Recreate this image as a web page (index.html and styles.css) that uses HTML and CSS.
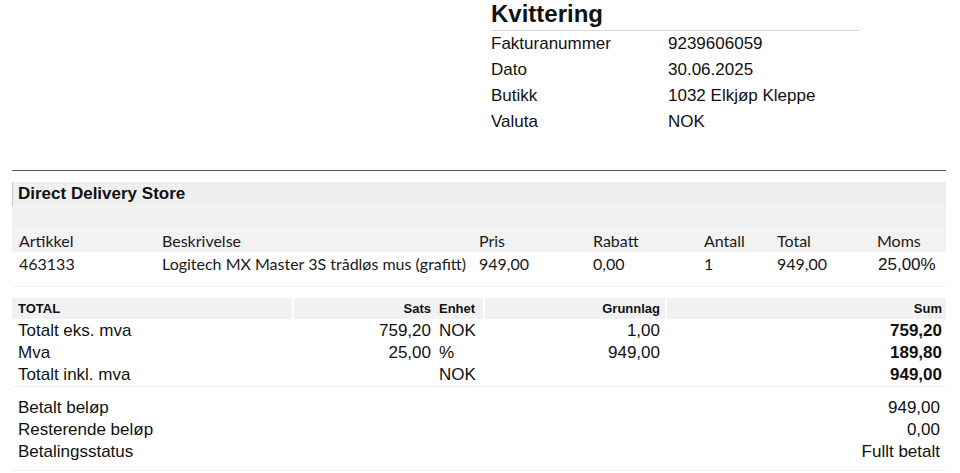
FILE: index.html
```html
<!DOCTYPE html>
<html lang="no">
<head>
<meta charset="utf-8">
<title>Kvittering</title>
<link rel="stylesheet" href="styles.css">
</head>
<body>
<div class="page">
  <header class="top">
    <div class="logo"></div>
    <div class="receipt">
      <h1 class="title">Kvittering</h1>
      <div class="info">
        <span class="info-label">Fakturanummer</span><span>9239606059</span>
        <span class="info-label">Dato</span><span>30.06.2025</span>
        <span class="info-label">Butikk</span><span>1032 Elkjøp Kleppe</span>
        <span class="info-label">Valuta</span><span>NOK</span>
      </div>
    </div>
  </header>

  <div class="rule"></div>

  <section class="items">
    <div class="store">Direct Delivery Store</div>
    <div class="band"></div>
    <div class="item-grid item-head">
      <span>Artikkel</span><span>Beskrivelse</span><span>Pris</span><span>Rabatt</span><span>Antall</span><span>Total</span><span>Moms</span>
    </div>
    <div class="item-grid item-row">
      <span>463133</span><span>Logitech MX Master 3S trådløs mus (grafitt)</span><span>949,00</span><span>0,00</span><span>1</span><span>949,00</span><span class="vat">25,00%</span>
    </div>
  </section>

  <section class="totals">
    <div class="tot-grid tot-head">
      <span class="c1">TOTAL</span><span class="r">Sats</span><span class="c3">Enhet</span><span class="r">Grunnlag</span><span class="r">Sum</span>
    </div>
    <div class="tot-body">
      <div class="tot-grid tot-row">
        <span class="c1">Totalt eks. mva</span><span class="r">759,20</span><span class="c3">NOK</span><span class="r">1,00</span><span class="r b">759,20</span>
      </div>
      <div class="tot-grid tot-row">
        <span class="c1">Mva</span><span class="r">25,00</span><span class="c3">%</span><span class="r">949,00</span><span class="r b">189,80</span>
      </div>
      <div class="tot-grid tot-row">
        <span class="c1">Totalt inkl. mva</span><span class="r"></span><span class="c3">NOK</span><span class="r"></span><span class="r b">949,00</span>
      </div>
    </div>
    <div class="pay">
      <div class="pay-row"><span>Betalt beløp</span><span>949,00</span></div>
      <div class="pay-row"><span>Resterende beløp</span><span>0,00</span></div>
      <div class="pay-row"><span>Betalingsstatus</span><span>Fullt betalt</span></div>
    </div>
  </section>
</div>
</body>
</html>
```

FILE: styles.css
```css
* { box-sizing: border-box; }
html, body { margin: 0; padding: 0; background: #fff; }
body {
  font-family: "Liberation Sans", Arial, sans-serif;
  color: #111;
  font-size: 17px;
}
.page {
  width: 960px;
  padding: 0 14px 0 12px;
}
.top {
  display: flex;
  height: 135px;
}
.logo {
  width: 479px;
  flex: none;
}
.receipt {
  width: 369px;
}
.title {
  margin: 0;
  font-size: 24px;
  font-weight: bold;
  height: 31px;
  border-bottom: 1px solid #dcdcdc;
  line-height: 27px;
}
.info {
  display: grid;
  grid-template-columns: 177px 1fr;
  grid-auto-rows: 26px;
  line-height: 24px;
}
.info span { padding-top: 1px; }

.rule {
  margin-top: 35px;
  height: 1px;
  background: #5a5a5a;
}
.items { margin-top: 11px; }
.store {
  height: 25px;
  background: #efefef;
  border-left: 1px solid #c8c8c8;
  font-weight: bold;
  line-height: 24px;
  padding-left: 5px;
  border-bottom: 1px solid #f7f7f7;
}
.band {
  height: 23px;
  background: #f1f1f1;
  border-bottom: 1px solid #f7f7f7;
}
.item-grid {
  display: grid;
  grid-template-columns: 143px 317px 114px 111px 73px 100px 76px;
  font-family: Lato, "Open Sans", sans-serif;
  font-size: 16px;
  line-height: 22px;
  color: #1a1a1a;
}
.item-grid span { padding-left: 7px; white-space: nowrap; }
.item-head {
  background: #f2f2f2;
  height: 22px;
}
.item-row {
  height: 35px;
  border-bottom: 1px solid #efefef;
  padding-top: 1px;
}
.item-row .vat {
  font-family: "Liberation Sans", Arial, sans-serif;
  font-size: 17px;
  padding-top: 1px;
  padding-left: 8px;
  color: #111;
}

.totals { margin-top: 11px; }
.tot-grid {
  display: grid;
  grid-template-columns: 280px 141px 46px 180px 279px;
  column-gap: 2px;
}
.tot-grid span { white-space: nowrap; }
.tot-grid .r { text-align: right; padding-right: 4px; }
.tot-grid .c1 { padding-left: 6px; }
.tot-grid .c3 { padding-left: 2px; }
.tot-head {
  font-size: 13px;
  font-weight: bold;
  line-height: 21px;
  height: 21px;
}
.tot-head span { background: #f1f1f1; }
.tot-head .c3 { margin-left: -2px; padding-left: 4px; }
.tot-head .r:nth-child(4) { padding-right: 5px; }
.tot-body {
  padding-top: 1px;
  border-bottom: 1px solid #efefef;
}
.tot-row {
  line-height: 22px;
  height: 22px;
}
.tot-row .r:nth-child(4) { padding-right: 5px; }
.tot-row .b { font-weight: bold; }
.pay {
  padding: 10px 0 7px;
  border-bottom: 1px solid #eeeeee;
}
.pay-row {
  display: flex;
  justify-content: space-between;
  line-height: 22px;
  height: 22px;
  padding: 0 6px 0 6px;
}
```
